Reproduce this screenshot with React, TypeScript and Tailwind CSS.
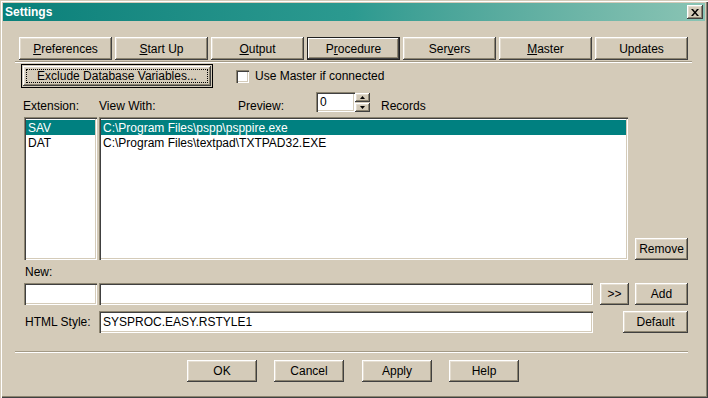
import React from 'react';

const raised =
  'bg-[#d4cbb9] shadow-[inset_-1px_-1px_0_#404040,inset_1px_1px_0_#ffffff,inset_-2px_-2px_0_#8c8470,inset_2px_2px_0_#e4ddd0]';
const sunken =
  'bg-white shadow-[inset_1px_1px_0_#8c8470,inset_2px_2px_0_#404040,inset_-1px_-1px_0_#ffffff,inset_-2px_-2px_0_#d4cbb9]';

function Btn({ w, children, pressed }: { w: string; children: React.ReactNode; pressed?: boolean }) {
  return (
    <div
      className={`${w} h-full flex items-center justify-center ${
        pressed
          ? 'bg-[#d4cbb9] border border-[#202020] shadow-[inset_-1px_-1px_0_#404040,inset_1px_1px_0_#ffffff,inset_-2px_-2px_0_#8c8470]'
          : raised
      }`}
    >
      {children}
    </div>
  );
}

export default function App() {
  const tabs = [
    { pre: '', key: 'P', post: 'references' },
    { pre: '', key: 'S', post: 'tart Up' },
    { pre: '', key: 'O', post: 'utput' },
    { pre: 'P', key: 'r', post: 'ocedure', pressed: true },
    { pre: 'Ser', key: 'v', post: 'ers' },
    { pre: '', key: 'M', post: 'aster' },
    { pre: 'Updates', key: '', post: '' },
  ];

  return (
    <div className="w-[708px] h-[398px] bg-[#d4cbb9] p-[3px] flex flex-col font-['Liberation_Sans',Arial,sans-serif] text-[12px] leading-[14px] text-black shadow-[inset_1px_1px_0_#d4cbb9,inset_2px_2px_0_#ffffff,inset_-1px_-1px_0_#404040,inset_-2px_-2px_0_#8c8470]">
      {/* Title bar */}
      <div className="h-[18px] flex items-center justify-between pl-[2px] pr-[2px] bg-gradient-to-r from-[#08807a] via-[#2c9a90] to-[#8ac4b4]">
        <span className="font-bold text-white">Settings</span>
        <div className={`w-[16px] h-[14px] flex items-center justify-center ${raised}`}>
          <svg width="8" height="7" viewBox="0 0 8 7">
            <path d="M0 0h2l2 2.5L6 0h2L5 3.5 8 7H6L4 4.5 2 7H0l3-3.5z" fill="#000" />
          </svg>
        </div>
      </div>

      <div className="flex flex-col pt-[16px]">
        {/* Tab buttons */}
        <div className="ml-[16px] flex gap-[3px] h-[23px]">
          {tabs.map((t, i) => (
            <Btn key={i} w="w-[93px]" pressed={t.pressed}>
              <span>
                {t.pre}
                {t.key && <u>{t.key}</u>}
                {t.post}
              </span>
            </Btn>
          ))}
        </div>
        <div className="ml-[12px] mt-[1px] w-[677px] border-t border-[#a39a86] border-b border-b-white" />

        {/* Exclude + checkbox */}
        <div className="ml-[18px] mt-[1px] flex items-center h-[24px]">
          <div className="w-[192px] h-full border border-black p-[1px]">
            <div className={`w-full h-full p-[3px] ${raised}`}>
              <div className="w-full h-full border border-dotted border-black flex items-center justify-center">
                Exclude Database Variables...
              </div>
            </div>
          </div>
          <div className={`ml-[23px] w-[13px] h-[13px] ${sunken}`} />
          <span className="ml-[6px]">Use Master if connected</span>
        </div>

        {/* Labels row */}
        <div className="mt-[4px] ml-[20px] flex items-end h-[21px]">
          <span className="w-[76px]">Extension:</span>
          <span className="w-[139px]">View With:</span>
          <span className="w-[78px]">Preview:</span>
          <div className="w-[55px] h-[20px] flex mb-[1px]">
            <div className={`w-[39px] h-full pl-[4px] flex items-center ${sunken}`}>0</div>
            <div className="w-[15px] flex flex-col gap-[1px] pt-[1px]">
              <div className={`h-[9px] flex items-center justify-center ${raised}`}>
                <svg width="5" height="3" viewBox="0 0 5 3">
                  <path d="M2.5 0L5 3H0z" fill="#000" />
                </svg>
              </div>
              <div className={`h-[9px] flex items-center justify-center ${raised}`}>
                <svg width="5" height="3" viewBox="0 0 5 3">
                  <path d="M0 0h5L2.5 3z" fill="#000" />
                </svg>
              </div>
            </div>
          </div>
          <span className="ml-[10px]">Records</span>
        </div>

        {/* Lists */}
        <div className="mt-[4px] ml-[21px] flex h-[143px]">
          <div className={`w-[73px] h-full p-[2px] ${sunken}`}>
            <div className="mt-[1px] h-[15px] pl-[2px] flex items-center bg-[#008080] text-white">SAV</div>
            <div className="h-[15px] pl-[2px] flex items-center">DAT</div>
          </div>
          <div className={`ml-[2px] w-[529px] h-full p-[2px] ${sunken}`}>
            <div className="mt-[1px] h-[15px] pl-[2px] flex items-center bg-[#008080] text-white">
              C:\Program Files\pspp\psppire.exe
            </div>
            <div className="h-[15px] pl-[2px] flex items-center">C:\Program Files\textpad\TXTPAD32.EXE</div>
          </div>
          <div className="ml-[7px] self-end h-[22px]">
            <Btn w="w-[53px]">Remove</Btn>
          </div>
        </div>

        <span className="mt-[5px] ml-[22px] h-[14px]">New:</span>

        {/* New row */}
        <div className="mt-[4px] ml-[21px] flex h-[22px]">
          <div className={`w-[73px] h-full ${sunken}`} />
          <div className={`ml-[2px] w-[494px] h-full ${sunken}`} />
          <div className="ml-[7px] h-full">
            <Btn w="w-[29px]">&gt;&gt;</Btn>
          </div>
          <div className="ml-[6px] h-full">
            <Btn w="w-[53px]">Add</Btn>
          </div>
        </div>

        {/* HTML style row */}
        <div className="mt-[6px] ml-[21px] flex items-center h-[22px]">
          <span className="w-[75px] pl-[1px]">HTML Style:</span>
          <div className={`w-[494px] h-full pl-[4px] flex items-center ${sunken}`}>SYSPROC.EASY.RSTYLE1</div>
          <div className="ml-[30px] h-full">
            <Btn w="w-[65px]">Default</Btn>
          </div>
        </div>

        <div className="ml-[12px] mt-[18px] w-[673px] border-t border-[#a39a86] border-b border-b-white" />

        {/* Bottom buttons */}
        <div className="mt-[7px] ml-[184px] flex h-[22px]">
          <Btn w="w-[70px]">OK</Btn>
          <div className="ml-[17px] h-full">
            <Btn w="w-[70px]">Cancel</Btn>
          </div>
          <div className="ml-[18px] h-full">
            <Btn w="w-[70px]">Apply</Btn>
          </div>
          <div className="ml-[17px] h-full">
            <Btn w="w-[70px]">Help</Btn>
          </div>
        </div>
      </div>
    </div>
  );
}
